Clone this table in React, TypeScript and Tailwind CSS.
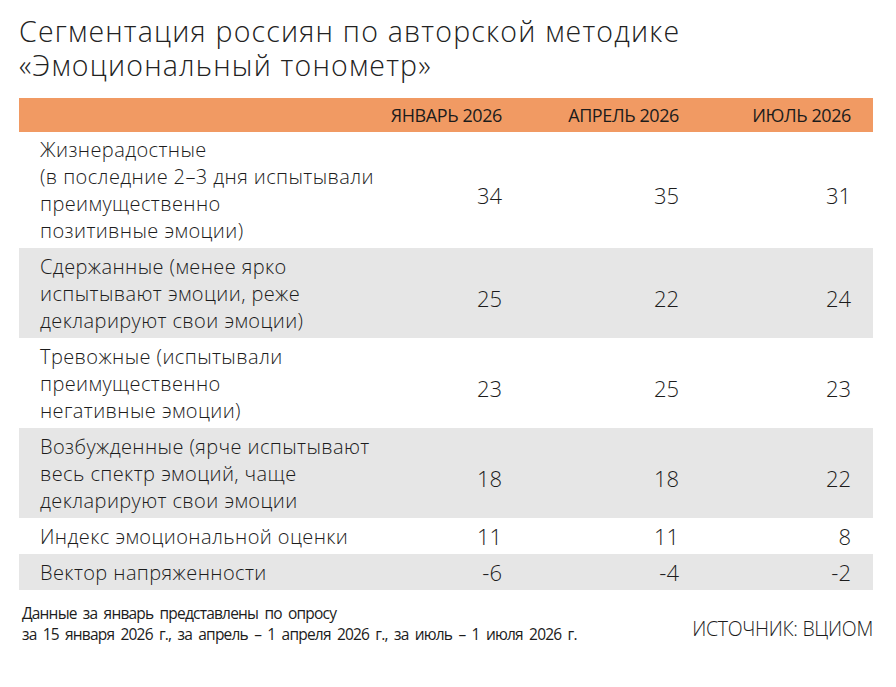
import React from "react";

const rows: { label: string[]; v: string[]; gray: boolean }[] = [
  {
    label: [
      "Жизнерадостные",
      "(в последние 2–3 дня испытывали",
      "преимущественно",
      "позитивные эмоции)",
    ],
    v: ["34", "35", "31"],
    gray: false,
  },
  {
    label: [
      "Сдержанные (менее ярко",
      "испытывают эмоции, реже",
      "декларируют свои эмоции)",
    ],
    v: ["25", "22", "24"],
    gray: true,
  },
  {
    label: ["Тревожные (испытывали", "преимущественно", "негативные эмоции)"],
    v: ["23", "25", "23"],
    gray: false,
  },
  {
    label: [
      "Возбужденные (ярче испытывают",
      "весь спектр эмоций, чаще",
      "декларируют свои эмоции",
    ],
    v: ["18", "18", "22"],
    gray: true,
  },
  { label: ["Индекс эмоциональной оценки"], v: ["11", "11", "8"], gray: false },
  { label: ["Вектор напряженности"], v: ["-6", "-4", "-2"], gray: true },
];

export default function App() {
  return (
    <div
      className="w-[896px] h-[687px] bg-white text-[#1c1c1c] overflow-hidden"
      style={{ fontFamily: '"Open Sans", "Noto Sans", sans-serif' }}
    >
      <div className="pl-[19px] pt-[14px] text-[28.5px] leading-[34px] font-light tracking-[1.2px] text-[#222]">
        <div>Сегментация россиян по авторской методике</div>
        <div>«Эмоциональный тонометр»</div>
      </div>
      <div className="ml-[19px] mt-[16px] w-[854px]">
        <div className="grid grid-cols-[340px_143px_177px_172px] bg-[#f19a63] h-[34px] items-center text-[18px] tracking-[-0.4px] pr-[22px]">
          <div />
          <div className="text-right">ЯНВАРЬ 2026</div>
          <div className="text-right">АПРЕЛЬ 2026</div>
          <div className="text-right">ИЮЛЬ 2026</div>
        </div>
        {rows.map((r, i) => (
          <div
            key={i}
            className={`grid grid-cols-[340px_143px_177px_172px] items-center pr-[22px] leading-[27px] font-light ${
              i === 0 ? "py-[4px]" : "py-[4.5px]"
            } ${r.gray ? "bg-[#e6e6e6]" : "bg-white"}`}
          >
            <div className="pl-[21px] text-[20px] tracking-[0.4px]">
              {r.label.map((l, j) => (
                <div key={j} className="whitespace-nowrap">
                  {l}
                </div>
              ))}
            </div>
            {r.v.map((v, j) => (
              <div
                key={j}
                className={`text-right text-[22px] ${r.label.length > 1 ? "pt-[11px]" : "pt-0"}`}
              >
                {v}
              </div>
            ))}
          </div>
        ))}
      </div>
      <div className="flex justify-between items-start ml-[22px] mr-[23px] mt-[13px]">
        <div className="text-[15.5px] leading-[21px] tracking-[-0.8px] [word-spacing:3px]">
          <div>Данные за январь представлены по опросу</div>
          <div>за 15 января 2026 г., за апрель – 1 апреля 2026 г., за июль – 1 июля 2026 г.</div>
        </div>
        <div className="mt-[14px] text-[19.5px] leading-[24px] font-light tracking-[-0.3px]">
          ИСТОЧНИК: ВЦИОМ
        </div>
      </div>
    </div>
  );
}
